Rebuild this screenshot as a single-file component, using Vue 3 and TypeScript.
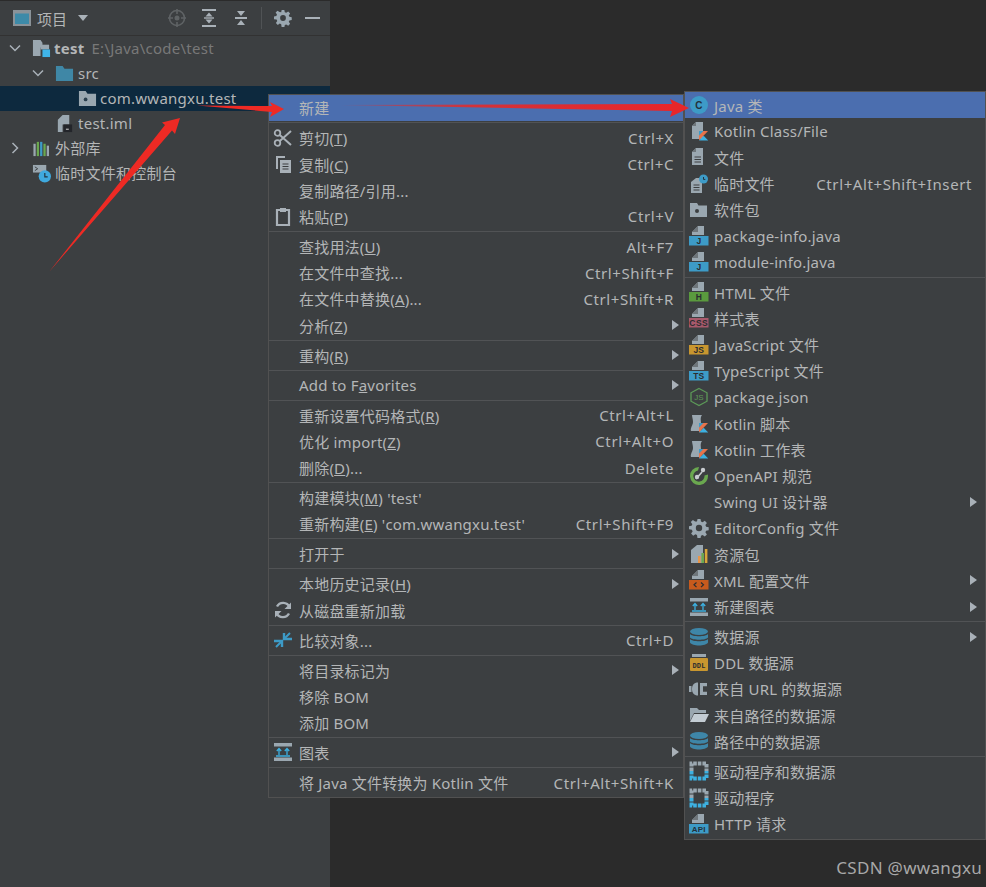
<script setup lang="ts">
interface Row {
  label?: string
  icon?: string
  keys?: string
  sub?: boolean
  active?: boolean
  sep?: boolean
}

const docTop = '<path d="M9 0h6v9H3V6z" fill="#9aa7b0"/><path d="M9 0v6H3z" fill="#6f767b"/>'
const tag = (fill: string, text: string, spacing = 0) =>
  docTop + `<rect x="0" y="10" width="19.5" height="9.5" fill="${fill}"/>` +
  `<text x="9.8" y="18" text-anchor="middle" font-size="8.5" font-weight="700" letter-spacing="${spacing}" font-family="Liberation Sans, sans-serif" fill="#2b2d30">${text}</text>`
const kotlinMark = '<path d="M10 10h9l-9 9.5z" fill="#e8734a"/><path d="M10 10h4.5L10 14.5z" fill="#3d9bc7"/><path d="M10 19.5l4.7-4.8 4.5 4.8z" fill="#3db0e0"/>'
const grayFile = '<path d="M7 1h7v17H3V5z" fill="#9aa7b0"/><path d="M7 1v4H3z" fill="#6f767b"/>'
const fileLines = '<path d="M5.5 10h6.5M5.5 12.5h6.5M5.5 15h6.5" stroke="#3c3f41" stroke-width="1.2"/>'
const gearShape = '<path d="M8.5 1h3l.5 2.6 1.6.7 2.2-1.5 2.1 2.1-1.5 2.2.7 1.6 2.6.5v3l-2.6.5-.7 1.6 1.5 2.2-2.1 2.1-2.2-1.5-1.6.7-.5 2.6h-3L8 16.9l-1.6-.7-2.2 1.5-2.1-2.1 1.5-2.2-.7-1.6L0 11.3v-3l2.6-.5.7-1.6-1.5-2.2 2.1-2.1 2.2 1.5L8 3.6z" fill="#9aa7b0"/><circle cx="10" cy="10" r="3.2" fill="#3c3f41"/>'
const diskStack = '<ellipse cx="10" cy="4.5" rx="9" ry="3.5" fill="#3e86a8"/><path d="M1 7c2 3 16 3 18 0v3.5c-2 3-16 3-18 0z" fill="#3e86a8"/><path d="M1 12c2 3 16 3 18 0v3.5c-2 4-16 4-18 0z" fill="#3e86a8"/>'
const diagramShape = '<rect x="1" y="1" width="18" height="3.5" fill="#9aa7b0"/><rect x="1" y="15.5" width="18" height="3.5" fill="#9aa7b0"/><path d="M6 13V7M3.8 9L6 6.5 8.2 9M14 13V7M11.8 9L14 6.5 16.2 9M3 14h14" stroke="#3db0e0" stroke-width="1.3" fill="none"/>'
const driverShape = '<path d="M2.5 10V2.5h15V10" fill="none" stroke="#9aa7b0" stroke-width="4" stroke-dasharray="3.6 1"/><path d="M2.5 10v7.5h15V10" fill="none" stroke="#3db0e0" stroke-width="4" stroke-dasharray="3.6 1"/>'
const scrollShape = '<path d="M3 2h10c-2 3-1 5-1 8v8H2c-1-3 2-6 2-9 0-3-1-5-1-7z" fill="#9aa7b0"/>'

const icons: Record<string, string> = {
  javaClass: '<circle cx="10" cy="10" r="9" fill="#3d9bc7"/><text x="10" y="13.5" text-anchor="middle" font-size="10" font-weight="700" font-family="Liberation Sans, sans-serif" fill="#23323c">C</text>',
  kotlinFile: grayFile + kotlinMark,
  file: grayFile + fileLines,
  scratch: '<path d="M7 4h6v15H2V8z" fill="#9aa7b0"/><path d="M4.5 11h6M4.5 13.5h6M4.5 16h6" stroke="#3c3f41" stroke-width="1.2"/><circle cx="14.5" cy="5" r="4.5" fill="#3d9bc7"/><path d="M14.5 3v2.4h1.8" stroke="#23323c" fill="none"/>',
  pkg: '<path d="M1 3h7l1.5 2.5H18V17H1z" fill="#9aa7b0"/><circle cx="8" cy="11" r="2" fill="#3c3f41"/>',
  javaInfo: tag('#3d9bc7', 'J'),
  html: tag('#5a9a3e', 'H'),
  css: tag('#a8596b', 'CSS', 0.5),
  js: tag('#c8962f', 'JS'),
  ts: tag('#3d9bc7', 'TS'),
  node: '<path d="M10 1.5l8 4.3v8.4l-8 4.3-8-4.3V5.8z" fill="none" stroke="#5c9a58" stroke-width="1.3"/><text x="10" y="13" text-anchor="middle" font-size="8" font-family="Liberation Sans, sans-serif" fill="#5c9a58">JS</text>',
  kotlinScript: scrollShape + kotlinMark,
  kotlinSheet: scrollShape + kotlinMark,
  openapi: '<path d="M10 1a9 9 0 1 0 8.9 7.5l-3.4 1A5.6 5.6 0 1 1 9 4.5z" fill="#6aa84f"/><path d="M7 13l6-7" stroke="#c8ccd0" stroke-width="1.6"/><circle cx="14" cy="4" r="2.2" fill="#c8ccd0"/><circle cx="8" cy="11" r="2.2" fill="#c8ccd0"/>',
  gear: gearShape,
  bundle: '<path d="M8 1h6v18H2V6z" fill="#9aa7b0"/><rect x="9" y="12" width="2.6" height="7" fill="#e8964a"/><rect x="12.4" y="9" width="2.6" height="10" fill="#6aa84f"/><rect x="15.8" y="5" width="2.6" height="14" fill="#d9a53a"/>',
  xml: docTop + '<rect x="0" y="10" width="19.5" height="9.5" fill="#c75a1d"/><path d="M7.5 12.5l-2.5 2.3 2.5 2.3M12 12.5l2.5 2.3-2.5 2.3" stroke="#2b2d30" stroke-width="1.2" fill="none"/>',
  diagram: diagramShape,
  db: diskStack,
  ddl: '<rect x="3" y="1" width="14" height="3" fill="#9aa7b0"/><rect x="1" y="5" width="18" height="13" rx="1" fill="#c8962f"/><text x="10" y="14.5" text-anchor="middle" font-size="7" font-weight="700" font-family="Liberation Mono, monospace" fill="#2b2d30">DDL</text>',
  url: '<rect x="0" y="7" width="2.5" height="6" fill="#9aa7b0"/><path d="M9 3.5v13C5 16.5 3 14 3 10s2-6.5 6-6.5z" fill="#9aa7b0"/><path d="M11 4h7v3.2h-4v5.6h4V16h-7z" fill="#9aa7b0"/>',
  folderOpen: '<path d="M1 3h7l2 2h7v3H5L1 16z" fill="#9aa7b0"/><path d="M5 9h15l-4 8H1z" fill="#c3ccd3"/>',
  driver: driverShape,
  api: docTop + '<rect x="0" y="10" width="19.5" height="9.5" fill="#3d9bc7"/><text x="9.8" y="18" text-anchor="middle" font-size="8" font-weight="700" font-family="Liberation Sans, sans-serif" fill="#23323c">API</text>',
  scissors: '<circle cx="4.5" cy="15" r="2.8" fill="none" stroke="#a9b1b8" stroke-width="1.8"/><circle cx="4.5" cy="5" r="2.8" fill="none" stroke="#a9b1b8" stroke-width="1.8"/><path d="M6.5 6.8L18 17M6.5 13.2L18 3" stroke="#a9b1b8" stroke-width="2"/>',
  copy: '<path d="M3 2h9v2H5v11H3z" fill="#a9b1b8"/><path d="M7 6h11v13H7z" fill="#a9b1b8"/><path d="M9.5 10h6M9.5 12.5h6M9.5 15h6" stroke="#3c3f41" stroke-width="1.2"/>',
  paste: '<path d="M4 4h12v15H4z" fill="none" stroke="#a9b1b8" stroke-width="2.2"/><rect x="7" y="2" width="6" height="4" fill="#a9b1b8"/>',
  reload: '<path d="M16.5 7A7 7 0 0 0 4 6.5M3.5 13A7 7 0 0 0 16 13.5" fill="none" stroke="#a9b1b8" stroke-width="2.4"/><path d="M18 2.5V9h-6.5zM2 17.5V11h6.5z" fill="#a9b1b8"/>',
  compare: '<path d="M11 3v6h8" stroke="#3d9bc7" stroke-width="2.4" fill="none"/><path d="M9 17v-6H1" stroke="#3d9bc7" stroke-width="2.4" fill="none"/><path d="M12 8l5-5M8 12l-5 5" stroke="#3d9bc7" stroke-width="2"/>',
}

const tree = [
  { id: 'test', depth: 0, caret: 'open', icon: 'module', bold: 'test', text: '', hint: 'E:\\Java\\code\\test' },
  { id: 'src', depth: 1, caret: 'open', icon: 'src', text: 'src' },
  { id: 'pkg', depth: 2, caret: '', icon: 'package', text: 'com.wwangxu.test', selected: true },
  { id: 'iml', depth: 1, caret: '', icon: 'iml', text: 'test.iml' },
  { id: 'lib', depth: 0, caret: 'closed', icon: 'lib', text: '外部库' },
  { id: 'scr', depth: 0, caret: '', icon: 'scr', text: '临时文件和控制台' },
]

const treeIcons: Record<string, string> = {
  module: '<path d="M1 1h8l2 3v5h-2v9H1z" fill="#9aa7b0"/><path d="M9 6h9v5H9z" fill="#9aa7b0"/><rect x="11" y="11" width="8" height="8" fill="#3fb4e8"/>',
  src: '<path d="M1 2h7l2 3h9v13H1z" fill="#3f87a6"/>',
  package: '<path d="M1 2h7l2 3h9v13H1z" fill="#9aa7b0"/><circle cx="8" cy="11" r="2" fill="#2b3f4d"/>',
  iml: '<path d="M8 1h7v10H8v8H3V6z" fill="#9aa7b0"/><rect x="9" y="11" width="9" height="8" fill="#23252a"/><rect x="11.5" y="15.5" width="3" height="1" fill="#ddd"/>',
  lib: '<path d="M1.5 5h2.4v13H1.5z" fill="#9aa7b0"/><path d="M5 3h2.4v15H5z" fill="#6aa84f"/><path d="M8.5 3h2.4v15H8.5z" fill="#3d9bc7"/><path d="M12 5h2.4v13H12z" fill="#6aa84f"/><path d="M15.5 7h2.4v11h-2.4z" fill="#9aa7b0"/>',
  scr: '<path d="M1 1h14v8H1z" fill="#9aa7b0"/><path d="M3 3l3 2-3 2" stroke="#3c3f41" fill="none"/><circle cx="13.5" cy="13" r="6.5" fill="#3fa9de"/><path d="M13.5 9.5v4h3" stroke="#23323c" fill="none" stroke-width="1.2"/>',
}

const leftMenu: Row[] = [
  { label: '新建', sub: true, active: true },
  { sep: true },
  { label: '剪切(_T)', icon: 'scissors', keys: 'Ctrl+X' },
  { label: '复制(_C)', icon: 'copy', keys: 'Ctrl+C' },
  { label: '复制路径/引用...' },
  { label: '粘贴(_P)', icon: 'paste', keys: 'Ctrl+V' },
  { sep: true },
  { label: '查找用法(_U)', keys: 'Alt+F7' },
  { label: '在文件中查找...', keys: 'Ctrl+Shift+F' },
  { label: '在文件中替换(_A)...', keys: 'Ctrl+Shift+R' },
  { label: '分析(_Z)', sub: true },
  { sep: true },
  { label: '重构(_R)', sub: true },
  { sep: true },
  { label: 'Add to F_avorites', sub: true },
  { sep: true },
  { label: '重新设置代码格式(_R)', keys: 'Ctrl+Alt+L' },
  { label: '优化 import(_Z)', keys: 'Ctrl+Alt+O' },
  { label: '删除(_D)...', keys: 'Delete' },
  { sep: true },
  { label: "构建模块(_M) 'test'" },
  { label: "重新构建(_E) 'com.wwangxu.test'", keys: 'Ctrl+Shift+F9' },
  { sep: true },
  { label: '打开于', sub: true },
  { sep: true },
  { label: '本地历史记录(_H)', sub: true },
  { label: '从磁盘重新加载', icon: 'reload' },
  { sep: true },
  { label: '比较对象...', icon: 'compare', keys: 'Ctrl+D' },
  { sep: true },
  { label: '将目录标记为', sub: true },
  { label: '移除 BOM' },
  { label: '添加 BOM' },
  { sep: true },
  { label: '图表', icon: 'diagram', sub: true },
  { sep: true },
  { label: '将 Java 文件转换为 Kotlin 文件', keys: 'Ctrl+Alt+Shift+K' },
]

const rightMenu: Row[] = [
  { label: 'Java 类', icon: 'javaClass', active: true },
  { label: 'Kotlin Class/File', icon: 'kotlinFile' },
  { label: '文件', icon: 'file' },
  { label: '临时文件', icon: 'scratch', keys: 'Ctrl+Alt+Shift+Insert' },
  { label: '软件包', icon: 'pkg' },
  { label: 'package-info.java', icon: 'javaInfo' },
  { label: 'module-info.java', icon: 'javaInfo' },
  { sep: true },
  { label: 'HTML 文件', icon: 'html' },
  { label: '样式表', icon: 'css' },
  { label: 'JavaScript 文件', icon: 'js' },
  { label: 'TypeScript 文件', icon: 'ts' },
  { label: 'package.json', icon: 'node' },
  { label: 'Kotlin 脚本', icon: 'kotlinScript' },
  { label: 'Kotlin 工作表', icon: 'kotlinSheet' },
  { label: 'OpenAPI 规范', icon: 'openapi' },
  { label: 'Swing UI 设计器', sub: true },
  { label: 'EditorConfig 文件', icon: 'gear' },
  { label: '资源包', icon: 'bundle' },
  { label: 'XML 配置文件', icon: 'xml', sub: true },
  { label: '新建图表', icon: 'diagram', sub: true },
  { sep: true },
  { label: '数据源', icon: 'db', sub: true },
  { label: 'DDL 数据源', icon: 'ddl' },
  { label: '来自 URL 的数据源', icon: 'url' },
  { label: '来自路径的数据源', icon: 'folderOpen' },
  { label: '路径中的数据源', icon: 'db' },
  { sep: true },
  { label: '驱动程序和数据源', icon: 'driver' },
  { label: '驱动程序', icon: 'driver' },
  { label: 'HTTP 请求', icon: 'api' },
]

// "_X" marks the underlined mnemonic letter
const parts = (label = '') => {
  const i = label.indexOf('_')
  if (i < 0) return { before: label, key: '', after: '' }
  return { before: label.slice(0, i), key: label[i + 1], after: label.slice(i + 2) }
}

const menus = [
  { id: 'left', rows: leftMenu },
  { id: 'right', rows: rightMenu },
]
</script>

<template>
  <div class="ide">
    <aside class="project">
      <header class="toolbar">
        <svg class="tb-view" width="18" height="18" viewBox="0 0 18 18">
          <rect x="0" y="1" width="18" height="16" fill="#8a9298" />
          <rect x="2" y="4.5" width="14" height="10.5" fill="#3d8aa8" />
        </svg>
        <span class="tb-title">项目</span>
        <svg class="tb-drop" width="12" height="8" viewBox="0 0 12 8"><path d="M1 1h10L6 7z" fill="#a9b1b8" /></svg>
        <span class="tb-space"></span>
        <svg class="tb-btn locate" width="20" height="20" viewBox="0 0 20 20">
          <circle cx="10" cy="10" r="7.5" fill="none" stroke="#5f6365" stroke-width="1.6" />
          <circle cx="10" cy="10" r="2.5" fill="#5f6365" />
          <path d="M10 1v5M10 14v5M1 10h5M14 10h5" stroke="#5f6365" stroke-width="1.6" />
        </svg>
        <svg class="tb-btn" width="20" height="20" viewBox="0 0 20 20">
          <path d="M3 2h14M3 18h14" stroke="#a9b1b8" stroke-width="2" />
          <path d="M10 4.5l3.5 4h-7zM10 15.5l3.5-4h-7z" fill="#a9b1b8" />
          <path d="M5 10h10" stroke="#a9b1b8" stroke-width="1.4" />
        </svg>
        <svg class="tb-btn" width="20" height="20" viewBox="0 0 20 20">
          <path d="M4 10h12" stroke="#a9b1b8" stroke-width="2" />
          <path d="M10 8l-4-5h8zM10 12l-4 5h8z" fill="#a9b1b8" />
        </svg>
        <i class="tb-sep"></i>
        <svg class="tb-btn" width="18" height="18" viewBox="0 0 20 20" v-html="icons.gear"></svg>
        <svg class="tb-btn" width="18" height="18" viewBox="0 0 18 18"><path d="M1 9h15" stroke="#a9b1b8" stroke-width="2" /></svg>
      </header>

      <ul class="tree">
        <li v-for="node in tree" :key="node.id" class="node" :class="[`depth-${node.depth}`, { selected: node.selected }]">
          <svg v-if="node.caret" class="caret" width="12" height="12" viewBox="0 0 12 12">
            <path :d="node.caret === 'open' ? 'M1 3.5l5 5 5-5' : 'M3.5 1l5 5-5 5'" fill="none" stroke="#a9b1b8" stroke-width="1.5" />
          </svg>
          <span v-else class="caret"></span>
          <svg class="node-icon" width="19" height="19" viewBox="0 0 20 20" v-html="treeIcons[node.icon]"></svg>
          <b v-if="node.bold">{{ node.bold }}</b>
          <span v-if="node.text" class="node-text">{{ node.text }}</span>
          <em v-if="node.hint">{{ node.hint }}</em>
        </li>
      </ul>
    </aside>

    <main class="editor"></main>

    <div v-for="menu in menus" :key="menu.id" class="menu" :class="menu.id">
      <template v-for="(row, i) in menu.rows" :key="i">
        <div v-if="row.sep" class="sep"></div>
        <div v-else class="item" :class="{ active: row.active }">
          <span class="icon">
            <svg v-if="row.icon" width="20" height="20" viewBox="0 0 20 20" v-html="icons[row.icon]"></svg>
          </span>
          <span class="label">{{ parts(row.label).before }}<u v-if="parts(row.label).key">{{ parts(row.label).key }}</u>{{ parts(row.label).after }}</span>
          <span v-if="row.keys" class="keys">{{ row.keys }}</span>
          <span v-if="row.sub" class="arrow"></span>
        </div>
      </template>
    </div>

    <svg class="marks" width="986" height="887" viewBox="0 0 986 887">
      <defs>
        <linearGradient id="tail" x1="340" y1="0" x2="672" y2="0" gradientUnits="userSpaceOnUse">
          <stop offset="0" stop-color="#e22b2b" stop-opacity="0.3" />
          <stop offset="0.4" stop-color="#e22b2b" stop-opacity="0.9" />
          <stop offset="1" stop-color="#e8262a" />
        </linearGradient>
      </defs>
      <path d="M49 272L165 125l-3-2.5L180 118l-5 16-3-3.5z" fill="#ee2a24" />
      <path d="M197 105.5l75 .5-2-4 14 7-14 8 2-5z" fill="#ee2a24" />
      <path d="M340 105l332-1-2-5 19 9-19 9 2-6z" fill="url(#tail)" />
    </svg>

    <span class="watermark">CSDN @wwangxu</span>
  </div>
</template>

<style>
html,
body {
  margin: 0;
  background: #2b2b2b;
}
</style>

<style scoped>
.ide {
  position: relative;
  display: flex;
  width: 986px;
  height: 887px;
  overflow: hidden;
  font-family: "Noto Sans", "Noto Sans CJK SC", sans-serif;
  font-size: 15px;
  color: #b4b6b7;
}

.project {
  width: 330px;
  flex: none;
  background: #3c3f41;
  border-top: 1px solid #2b2b2b;
  box-sizing: border-box;
}

.editor {
  flex: 1;
  background: #2b2b2b;
}

.toolbar {
  display: flex;
  align-items: center;
  height: 34px;
  padding: 0 8px 0 13px;
  border-bottom: 1px solid #323232;
}

.tb-title {
  margin-left: 6px;
}

.tb-drop {
  margin-left: 10px;
}

.tb-space {
  flex: 1;
}

.tb-btn {
  margin-left: 12px;
}

.tb-sep {
  width: 1px;
  height: 22px;
  margin-left: 10px;
  background: #505355;
}

.tree {
  margin: 0;
  padding: 0;
  list-style: none;
}

.node {
  display: flex;
  align-items: center;
  height: 25px;
  white-space: nowrap;
}

.node.selected {
  background: #0d293e;
}

.depth-0 {
  padding-left: 9px;
}

.depth-1 {
  padding-left: 32px;
}

.depth-2 {
  padding-left: 55px;
}

.caret {
  width: 12px;
  flex: none;
  margin-right: 11px;
  margin-bottom: 2px;
}

.node-icon {
  flex: none;
  margin-right: 4px;
}

.node-text,
.node b,
.node em {
  margin-bottom: 2px;
  letter-spacing: 0.25px;
}

.selected .node-text {
  margin-left: -1px;
}

.node b {
  margin-left: -1px;
  font-weight: 700;
}

.node em {
  margin-left: 7px;
  font-style: normal;
  color: #787878;
}

.menu {
  position: absolute;
  box-sizing: border-box;
  background: #3c3f41;
  border: 1px solid #515151;
  white-space: nowrap;
  letter-spacing: 0.2px;
}

.menu.left {
  left: 268px;
  top: 93.8px;
  width: 416px;
  height: 704px;
}

.menu.right {
  left: 684px;
  top: 91px;
  width: 302px;
  height: 749px;
}

.item {
  display: flex;
  align-items: center;
  height: 26.2px;
}

.left .item {
  padding-right: 4px;
}

.right .item {
  padding-right: 8px;
}

.item.active {
  background: #4b6eaf;
}

.icon {
  display: flex;
  align-items: center;
  width: 29px;
  flex: none;
  padding-left: 4px;
  box-sizing: border-box;
}

.left .icon {
  width: 30px;
}

.label {
  flex: 1;
}

.keys {
  margin-right: 5px;
  letter-spacing: 0.6px;
}

.arrow {
  width: 0;
  height: 0;
  border-left: 7.5px solid #a9b1b8;
  border-top: 5px solid transparent;
  border-bottom: 5px solid transparent;
}

.sep {
  height: 3.85px;
  display: flex;
  align-items: center;
}

.sep::before {
  content: "";
  flex: 1;
  height: 1px;
  background: #515355;
}

.marks {
  position: absolute;
  left: 0;
  top: 0;
  pointer-events: none;
}

.watermark {
  position: absolute;
  right: 4px;
  bottom: 8px;
  font-size: 17px;
  letter-spacing: 0.3px;
  color: #a8a8a8;
}
</style>
